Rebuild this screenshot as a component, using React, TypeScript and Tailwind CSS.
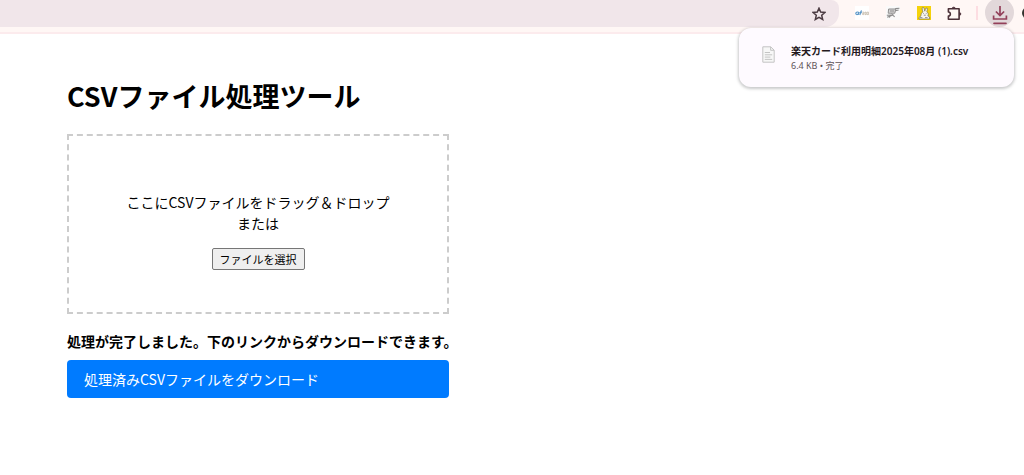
import { useRef, useState } from 'react';

const iconButton = 'flex size-[31px] shrink-0 items-center justify-center';

function StarIcon() {
  return (
    <svg width="14" height="14" viewBox="0 0 14 14" fill="none" stroke="#4b3b42" strokeWidth="1.5">
      <path d="M7 1.2 8.7 5.1 12.9 5.5 9.7 8.3 10.7 12.5 7 10.3 3.3 12.5 4.3 8.3 1.1 5.5 5.3 5.1Z" />
    </svg>
  );
}

function BlueMarkIcon() {
  return (
    <svg width="14" height="14" viewBox="0 0 14 14">
      <rect width="14" height="14" fill="#fff" />
      <path d="M3.6 6.2C2 5.6.8 6.6.8 7.6.8 8.8 2.4 8.8 3.2 7.8M3.8 5.8 3.2 8.8M4.8 9 6 5.2 7 4.9M4.6 6.6H6.8" fill="none" stroke="#5b97c8" strokeWidth="1.2" />
      <path d="M7.4 6.2H9V7.4H7.6V8.6H9.2M10 6V8.6H11.2V6.2H10M12 6.2H13.6V8.6H12Z" fill="none" stroke="#c3b9a8" strokeWidth=".8" />
    </svg>
  );
}

function GreyMarkIcon() {
  return (
    <svg width="14" height="14" viewBox="0 0 14 14">
      <rect width="14" height="14" fill="#fafafa" />
      <path d="M2.6 3H9.8L8.8 7.2H2.2Z" fill="#d4d4d4" stroke="#8f8f8f" />
      <path d="M4 5H8M9.2 2.6 13.4 2.2M9.4 4.8 12.6 4M.8 9.2 4.4 9 3.4 11.6M5.4 7.6 8.6 10.8M1.2 11.2 7.6 8.8" fill="none" stroke="#8b8b8b" strokeWidth="1.1" />
    </svg>
  );
}

function RabbitIcon() {
  return (
    <svg width="14" height="14" viewBox="0 0 14 14">
      <rect width="14" height="14" fill="#f5d20a" />
      <path d="M6 5.8C5 3.8 4.8 1.6 5.8 1.2 7 1.2 7.4 3.4 7.8 5.2 8.2 3.4 8.8 1.6 10 2 10.8 2.8 10.2 4.6 9.8 5.8 11.6 6.8 11.6 8.8 10.8 9.8L12.6 11V13H2V11.6L4 9.8C4 7.6 4.6 6.6 6 5.8Z" fill="#f7f5ee" stroke="#7a7350" strokeWidth=".7" />
      <path d="M6.2 7.4H7M8.8 7.4H9.6M6.8 9.2H8.8M3 11.6H5.4M8 11.6H10.6" stroke="#777" strokeWidth=".8" />
    </svg>
  );
}

function PuzzleIcon() {
  return (
    <svg width="15" height="15" viewBox="0 0 15 15" fill="none" stroke="#4b3038" strokeWidth="1.6" strokeLinejoin="round">
      <path d="M1.4 2.7H12.1V13.3H1.4V10.1C4 10 4 6.1 1.4 6Z" />
      <path d="M5.2 2.2C5.4.8 8 .8 8.2 2.2ZM12.6 6.5C14.2 6.7 14.2 9.2 12.6 9.4Z" fill="#4b3038" strokeWidth=".8" />
    </svg>
  );
}

function DownloadIcon() {
  return (
    <svg width="16" height="20" viewBox="0 0 16 20" fill="none" stroke="#93405a" strokeWidth="1.7">
      <path d="M8 1V10.4M3.9 6.5 8 10.6 12.1 6.5M1.6 10.4V14H14.4V10.4" />
      <path d="M2 18.3H14" strokeLinecap="round" />
    </svg>
  );
}

function FileIcon() {
  return (
    <svg width="13" height="17" viewBox="0 0 13 17" fill="#f7f7f7" stroke="#c4c4c4">
      <path d="M.8.8H8.7L12.2 4.2V16.2H.8Z" />
      <path d="M8.6.9V4.3H12M2.8 6.5H8M2.8 8.8H10.2M2.8 11.1H8.4M2.8 13.4H10.2" fill="none" />
    </svg>
  );
}

function BrowserBar() {
  return (
    <header className="flex h-[34px] items-start overflow-hidden border-b-2 border-[#fcebed] bg-[#fff7f5]">
      <div className="flex h-[27px] flex-1 items-center justify-end rounded-tr-lg rounded-br-[14px] bg-[#f1e6ea] pr-[13px]">
        <button type="button" aria-label="ブックマーク">
          <StarIcon />
        </button>
      </div>
      <div className="flex h-[26px] items-center pl-[7px]">
        <button type="button" aria-label="拡張機能 1" className={iconButton}><BlueMarkIcon /></button>
        <button type="button" aria-label="拡張機能 2" className={iconButton}><GreyMarkIcon /></button>
        <button type="button" aria-label="拡張機能 3" className={iconButton}><RabbitIcon /></button>
        <button type="button" aria-label="拡張機能" className={iconButton}><PuzzleIcon /></button>
        <span className="ml-[6px] h-[14px] w-[2px] bg-[#fddde2]" />
      </div>
      <button
        type="button"
        aria-label="ダウンロード"
        className="-mt-0.5 ml-[7px] flex size-[29px] shrink-0 items-center justify-center rounded-full bg-[#e2d8da] pt-[5px]"
      >
        <DownloadIcon />
      </button>
      <div className="w-[10px] shrink-0 overflow-hidden pt-[7px] pl-2">
        <div className="size-3 rounded-full bg-[#33332f]" />
      </div>
    </header>
  );
}

function DownloadPopup() {
  return (
    <aside className="absolute top-7 right-[10px] flex h-[59px] w-[275px] rounded-xl bg-[#fefaff] pt-[15px] pl-[23px] font-['Noto_Sans','Noto_Sans_CJK_JP',sans-serif] shadow-[0_1px_3px_1px_rgba(60,64,67,0.28)]">
      <div className="pt-[3px]">
        <FileIcon />
      </div>
      <div className="ml-4 whitespace-nowrap">
        <div className="text-[10px] leading-4 font-semibold text-[#24191d]">楽天カード利用明細2025年08月 (1).csv</div>
        <div className="text-[9px] leading-[14px] text-[#5f5357]">6.4 KB • 完了</div>
      </div>
    </aside>
  );
}

export default function App() {
  const inputRef = useRef<HTMLInputElement>(null);
  const [file, setFile] = useState<File | null>(null);

  const href = file ? `#${file.name}` : '#result';

  return (
    <div className="relative min-h-screen bg-white font-['Noto_Sans_CJK_JP',sans-serif] text-black">
      <BrowserBar />
      <DownloadPopup />

      <main className="mx-[67px] max-w-[382px] pt-[42px] text-[14px] leading-[21px]">
        <h1 className="text-[27px] leading-10 font-bold whitespace-nowrap">CSVファイル処理ツール</h1>

        {/* Drop area */}
        <div
          className="mt-[18px] border-2 border-dashed border-[#ccc] px-4 pt-14 pb-[42px] text-center"
          onDragOver={(e) => e.preventDefault()}
          onDrop={(e) => {
            e.preventDefault();
            setFile(e.dataTransfer.files[0] ?? null);
          }}
        >
          <p className="whitespace-nowrap">
            ここにCSVファイルをドラッグ＆ドロップ
            <br />
            または
          </p>
          <input
            ref={inputRef}
            type="file"
            accept=".csv"
            aria-label="CSVファイル"
            className="hidden"
            onChange={(e) => setFile(e.target.files?.[0] ?? null)}
          />
          <button
            type="button"
            onClick={() => inputRef.current?.click()}
            className="mx-auto mt-[14px] flex h-[22px] items-center rounded-xs border border-[#767676] bg-[#efefef] px-[7px] text-[11px] leading-4"
          >
            ファイルを選択
          </button>
        </div>

        <p className="mt-[17px] font-bold whitespace-nowrap">処理が完了しました。下のリンクからダウンロードできます。</p>
        <a href={href} className="mt-2 block rounded bg-[#007bff] px-[17px] py-[9px] leading-5 text-white">
          処理済みCSVファイルをダウンロード
        </a>
      </main>
    </div>
  );
}
